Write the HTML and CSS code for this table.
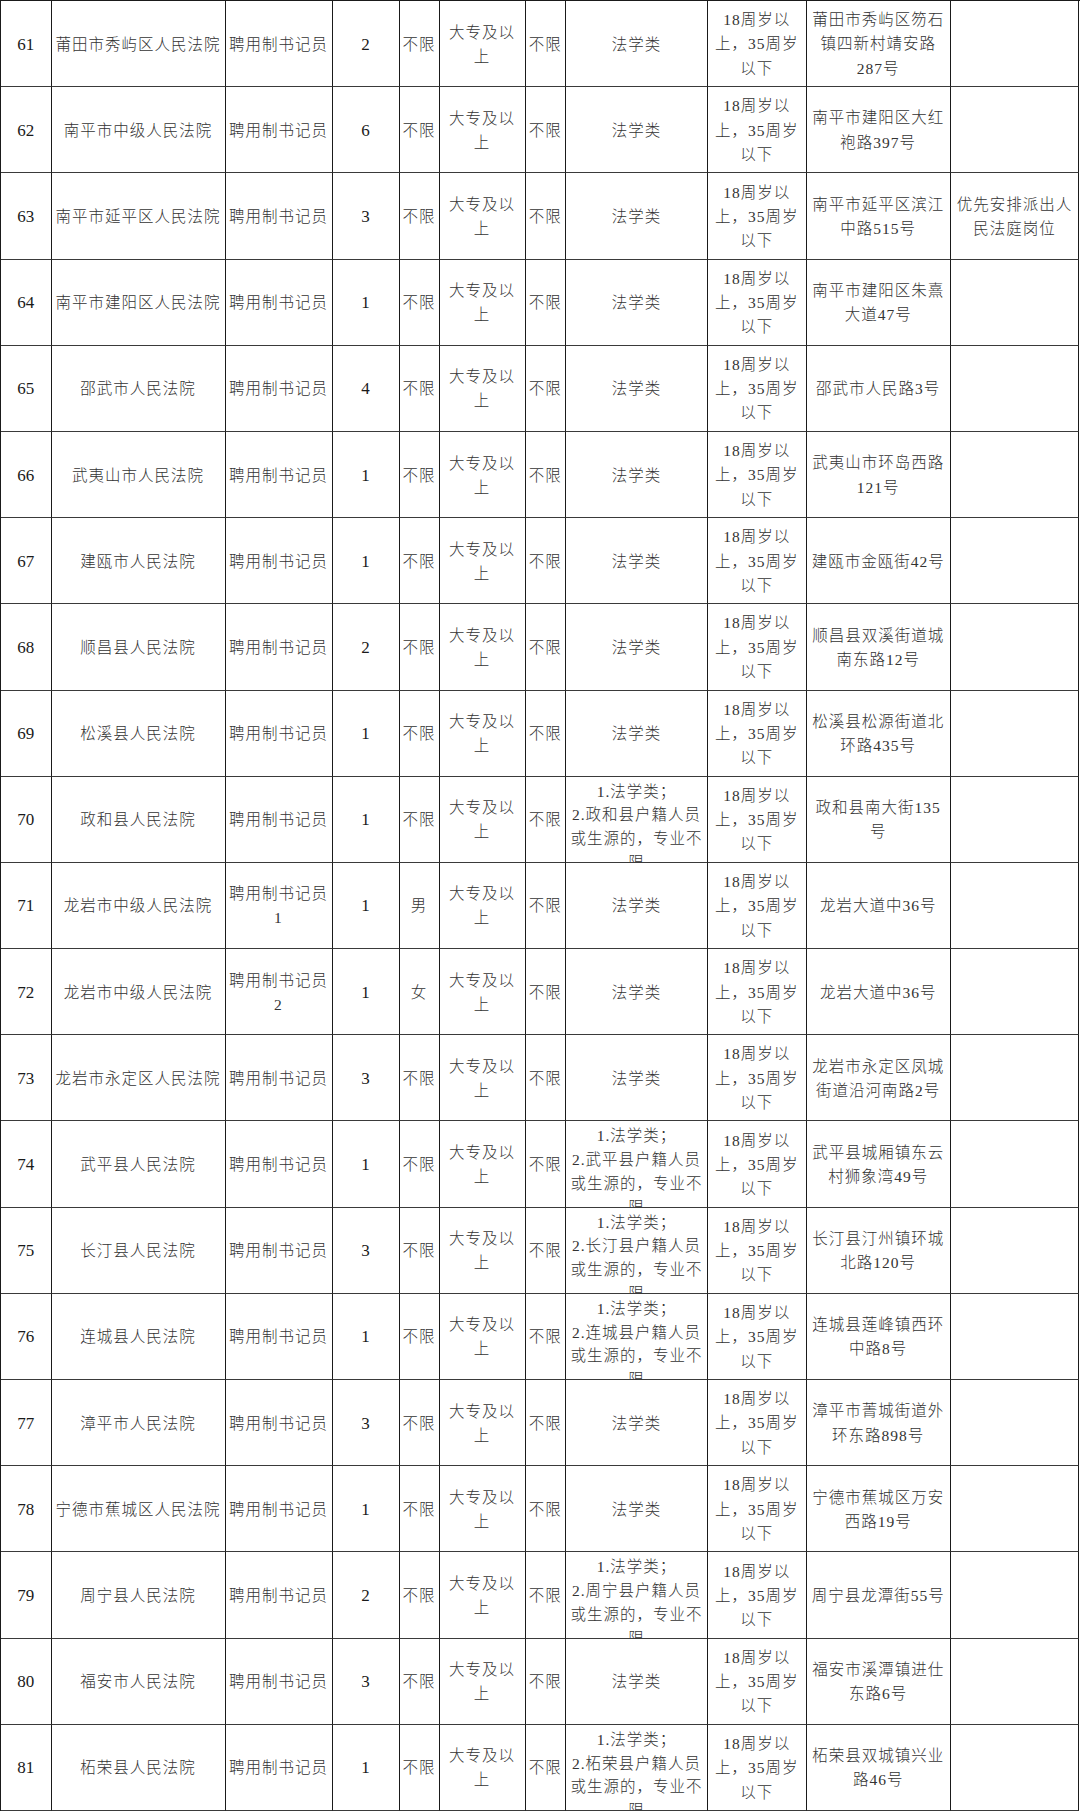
FILE: index.html
```html
<!DOCTYPE html>
<html lang="zh-CN">
<head>
<meta charset="utf-8">
<title>聘用制书记员岗位表</title>
<link rel="stylesheet" href="styles.css">
</head>
<body>
<div class="t">
  <div class="c n">61</div><div class="c">莆田市秀屿区人民法院</div><div class="c">聘用制书记员</div><div class="c n">2</div><div class="c">不限</div><div class="c edu">大专及以<br>上</div><div class="c">不限</div><div class="c">法学类</div><div class="c age">18周岁以<br>上，35周岁<br>以下</div><div class="c addr">莆田市秀屿区笏石<br>镇四新村靖安路<br>287号</div><div class="c"></div>
  <div class="c n">62</div><div class="c">南平市中级人民法院</div><div class="c">聘用制书记员</div><div class="c n">6</div><div class="c">不限</div><div class="c edu">大专及以<br>上</div><div class="c">不限</div><div class="c">法学类</div><div class="c age">18周岁以<br>上，35周岁<br>以下</div><div class="c addr">南平市建阳区大红<br>袍路397号</div><div class="c"></div>
  <div class="c n">63</div><div class="c">南平市延平区人民法院</div><div class="c">聘用制书记员</div><div class="c n">3</div><div class="c">不限</div><div class="c edu">大专及以<br>上</div><div class="c">不限</div><div class="c">法学类</div><div class="c age">18周岁以<br>上，35周岁<br>以下</div><div class="c addr">南平市延平区滨江<br>中路515号</div><div class="c addr">优先安排派出人<br>民法庭岗位</div>
  <div class="c n">64</div><div class="c">南平市建阳区人民法院</div><div class="c">聘用制书记员</div><div class="c n">1</div><div class="c">不限</div><div class="c edu">大专及以<br>上</div><div class="c">不限</div><div class="c">法学类</div><div class="c age">18周岁以<br>上，35周岁<br>以下</div><div class="c addr">南平市建阳区朱熹<br>大道47号</div><div class="c"></div>
  <div class="c n">65</div><div class="c">邵武市人民法院</div><div class="c">聘用制书记员</div><div class="c n">4</div><div class="c">不限</div><div class="c edu">大专及以<br>上</div><div class="c">不限</div><div class="c">法学类</div><div class="c age">18周岁以<br>上，35周岁<br>以下</div><div class="c addr">邵武市人民路3号</div><div class="c"></div>
  <div class="c n">66</div><div class="c">武夷山市人民法院</div><div class="c">聘用制书记员</div><div class="c n">1</div><div class="c">不限</div><div class="c edu">大专及以<br>上</div><div class="c">不限</div><div class="c">法学类</div><div class="c age">18周岁以<br>上，35周岁<br>以下</div><div class="c addr">武夷山市环岛西路<br>121号</div><div class="c"></div>
  <div class="c n">67</div><div class="c">建瓯市人民法院</div><div class="c">聘用制书记员</div><div class="c n">1</div><div class="c">不限</div><div class="c edu">大专及以<br>上</div><div class="c">不限</div><div class="c">法学类</div><div class="c age">18周岁以<br>上，35周岁<br>以下</div><div class="c addr">建瓯市金瓯街42号</div><div class="c"></div>
  <div class="c n">68</div><div class="c">顺昌县人民法院</div><div class="c">聘用制书记员</div><div class="c n">2</div><div class="c">不限</div><div class="c edu">大专及以<br>上</div><div class="c">不限</div><div class="c">法学类</div><div class="c age">18周岁以<br>上，35周岁<br>以下</div><div class="c addr">顺昌县双溪街道城<br>南东路12号</div><div class="c"></div>
  <div class="c n">69</div><div class="c">松溪县人民法院</div><div class="c">聘用制书记员</div><div class="c n">1</div><div class="c">不限</div><div class="c edu">大专及以<br>上</div><div class="c">不限</div><div class="c">法学类</div><div class="c age">18周岁以<br>上，35周岁<br>以下</div><div class="c addr">松溪县松源街道北<br>环路435号</div><div class="c"></div>
  <div class="c n">70</div><div class="c">政和县人民法院</div><div class="c">聘用制书记员</div><div class="c n">1</div><div class="c">不限</div><div class="c edu">大专及以<br>上</div><div class="c">不限</div><div class="c maj">1.法学类；<br>2.政和县户籍人员<br>或生源的，专业不<br>限</div><div class="c age">18周岁以<br>上，35周岁<br>以下</div><div class="c addr">政和县南大街135<br>号</div><div class="c"></div>
  <div class="c n">71</div><div class="c">龙岩市中级人民法院</div><div class="c pos">聘用制书记员<br>1</div><div class="c n">1</div><div class="c">男</div><div class="c edu">大专及以<br>上</div><div class="c">不限</div><div class="c">法学类</div><div class="c age">18周岁以<br>上，35周岁<br>以下</div><div class="c addr">龙岩大道中36号</div><div class="c"></div>
  <div class="c n">72</div><div class="c">龙岩市中级人民法院</div><div class="c pos">聘用制书记员<br>2</div><div class="c n">1</div><div class="c">女</div><div class="c edu">大专及以<br>上</div><div class="c">不限</div><div class="c">法学类</div><div class="c age">18周岁以<br>上，35周岁<br>以下</div><div class="c addr">龙岩大道中36号</div><div class="c"></div>
  <div class="c n">73</div><div class="c">龙岩市永定区人民法院</div><div class="c">聘用制书记员</div><div class="c n">3</div><div class="c">不限</div><div class="c edu">大专及以<br>上</div><div class="c">不限</div><div class="c">法学类</div><div class="c age">18周岁以<br>上，35周岁<br>以下</div><div class="c addr">龙岩市永定区凤城<br>街道沿河南路2号</div><div class="c"></div>
  <div class="c n">74</div><div class="c">武平县人民法院</div><div class="c">聘用制书记员</div><div class="c n">1</div><div class="c">不限</div><div class="c edu">大专及以<br>上</div><div class="c">不限</div><div class="c maj">1.法学类；<br>2.武平县户籍人员<br>或生源的，专业不<br>限</div><div class="c age">18周岁以<br>上，35周岁<br>以下</div><div class="c addr">武平县城厢镇东云<br>村狮象湾49号</div><div class="c"></div>
  <div class="c n">75</div><div class="c">长汀县人民法院</div><div class="c">聘用制书记员</div><div class="c n">3</div><div class="c">不限</div><div class="c edu">大专及以<br>上</div><div class="c">不限</div><div class="c maj">1.法学类；<br>2.长汀县户籍人员<br>或生源的，专业不<br>限</div><div class="c age">18周岁以<br>上，35周岁<br>以下</div><div class="c addr">长汀县汀州镇环城<br>北路120号</div><div class="c"></div>
  <div class="c n">76</div><div class="c">连城县人民法院</div><div class="c">聘用制书记员</div><div class="c n">1</div><div class="c">不限</div><div class="c edu">大专及以<br>上</div><div class="c">不限</div><div class="c maj">1.法学类；<br>2.连城县户籍人员<br>或生源的，专业不<br>限</div><div class="c age">18周岁以<br>上，35周岁<br>以下</div><div class="c addr">连城县莲峰镇西环<br>中路8号</div><div class="c"></div>
  <div class="c n">77</div><div class="c">漳平市人民法院</div><div class="c">聘用制书记员</div><div class="c n">3</div><div class="c">不限</div><div class="c edu">大专及以<br>上</div><div class="c">不限</div><div class="c">法学类</div><div class="c age">18周岁以<br>上，35周岁<br>以下</div><div class="c addr">漳平市菁城街道外<br>环东路898号</div><div class="c"></div>
  <div class="c n">78</div><div class="c">宁德市蕉城区人民法院</div><div class="c">聘用制书记员</div><div class="c n">1</div><div class="c">不限</div><div class="c edu">大专及以<br>上</div><div class="c">不限</div><div class="c">法学类</div><div class="c age">18周岁以<br>上，35周岁<br>以下</div><div class="c addr">宁德市蕉城区万安<br>西路19号</div><div class="c"></div>
  <div class="c n">79</div><div class="c">周宁县人民法院</div><div class="c">聘用制书记员</div><div class="c n">2</div><div class="c">不限</div><div class="c edu">大专及以<br>上</div><div class="c">不限</div><div class="c maj">1.法学类；<br>2.周宁县户籍人员<br>或生源的，专业不<br>限</div><div class="c age">18周岁以<br>上，35周岁<br>以下</div><div class="c addr">周宁县龙潭街55号</div><div class="c"></div>
  <div class="c n">80</div><div class="c">福安市人民法院</div><div class="c">聘用制书记员</div><div class="c n">3</div><div class="c">不限</div><div class="c edu">大专及以<br>上</div><div class="c">不限</div><div class="c">法学类</div><div class="c age">18周岁以<br>上，35周岁<br>以下</div><div class="c addr">福安市溪潭镇进仕<br>东路6号</div><div class="c"></div>
  <div class="c n">81</div><div class="c">柘荣县人民法院</div><div class="c">聘用制书记员</div><div class="c n">1</div><div class="c">不限</div><div class="c edu">大专及以<br>上</div><div class="c">不限</div><div class="c maj">1.法学类；<br>2.柘荣县户籍人员<br>或生源的，专业不<br>限</div><div class="c age">18周岁以<br>上，35周岁<br>以下</div><div class="c addr">柘荣县双城镇兴业<br>路46号</div><div class="c"></div>
</div>
</body>
</html>
```
FILE: styles.css
```css
html, body {
  margin: 0;
  padding: 0;
  background: #ffffff;
}

.t {
  display: grid;
  grid-template-columns: 50.5px 174px 107px 67px 40px 86px 40.5px 142px 98.5px 144.5px 128px;
  grid-template-rows: repeat(21, 1fr);
  width: 1080px;
  height: 1811px;
  box-sizing: border-box;
  border-top: 1px solid #1a1a1a;
  border-left: 1px solid #1a1a1a;
  font-family: "Liberation Serif", "Noto Sans CJK SC", serif;
  font-size: 15.5px;
  letter-spacing: 1px;
  color: #333333;
}

.c {
  box-sizing: border-box;
  border-right: 1px solid #1a1a1a;
  border-bottom: 1px solid #3a3a3a;
  display: flex;
  align-items: center;
  justify-content: center;
  text-align: center;
  white-space: nowrap;
  overflow: hidden;
  line-height: 24px;
  padding-top: 2px;
  font-weight: 300;
  min-width: 0;
  min-height: 0;
}

.n {
  font-size: 17px;
  letter-spacing: 0;
  color: #1a1a1a;
  font-weight: 400;
}

.edu {
  line-height: 24px;
}

.age,
.addr {
  line-height: 24.3px;
}

.maj {
  align-items: flex-start;
  padding-top: 3px;
  line-height: 23.7px;
}
```
